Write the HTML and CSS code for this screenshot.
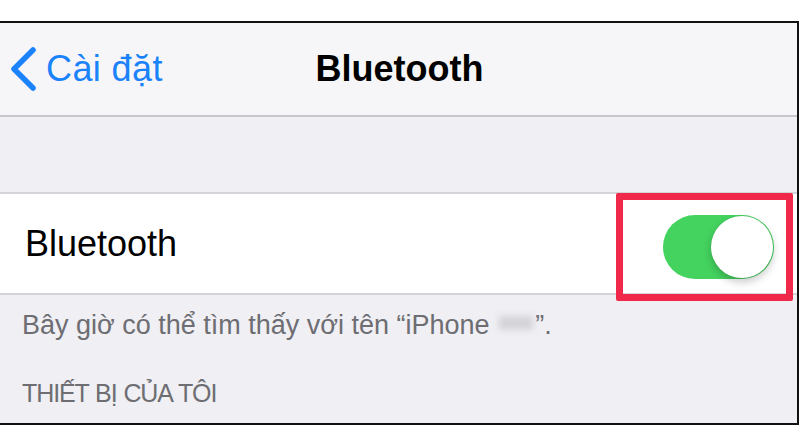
FILE: index.html
```html
<!DOCTYPE html>
<html lang="vi">
<head>
<meta charset="utf-8">
<link rel="stylesheet" href="styles.css">
</head>
<body>
<div class="frame">
  <header class="nav">
    <div class="back">
      <svg class="chev" width="30" height="46" viewBox="0 0 30 46"><path d="M25 4 L6 23 L25 42" fill="none" stroke="#1a82fb" stroke-width="5.5" stroke-linecap="round" stroke-linejoin="round"/></svg>
      <span class="back-label">Cài đặt</span>
    </div>
    <div class="title">Bluetooth</div>
  </header>
  <div class="gap"></div>
  <div class="cell">
    <span class="cell-label">Bluetooth</span>
    <div class="highlight">
      <div class="toggle"><div class="knob"></div></div>
    </div>
  </div>
  <div class="footer">
    <p class="note">Bây giờ có thể tìm thấy với tên “iPhone <span class="blur"></span>”.</p>
    <p class="section">THIẾT BỊ CỦA TÔI</p>
  </div>
</div>
</body>
</html>
```
FILE: styles.css
```css
* { box-sizing: border-box; }
html, body { margin: 0; padding: 0; background: #fff; }
body { font-family: "Liberation Sans", Arial, sans-serif; }
.frame {
  margin-top: 21px;
  width: 799px;
  height: 404px;
  border-top: 2px solid #111;
  border-bottom: 2px solid #111;
  border-right: 2px solid #111;
  background: #efeff4;
  display: flex;
  flex-direction: column;
}
.nav {
  height: 94px;
  background: #f6f6f8;
  border-bottom: 2px solid #c8c8cc;
  display: flex;
  align-items: center;
  position: relative;
}
.back {
  display: flex;
  align-items: center;
  padding-left: 8px;
  gap: 8px;
  color: #1a82fb;
}
.chev { display: block; }
.back-label { font-size: 36px; color: #1a82fb; letter-spacing: 0.4px; }
.title {
  position: absolute;
  left: 0; right: 0;
  text-align: center;
  font-size: 36px;
  font-weight: bold;
  color: #000;
  padding-left: 2px;
}
.gap {
  height: 77px;
  border-bottom: 2px solid #d3d3d8;
}
.cell {
  height: 101px;
  background: #fff;
  border-bottom: 2px solid #d3d3d8;
  display: flex;
  align-items: center;
  justify-content: space-between;
  padding-left: 25px;
  position: relative;
}
.cell-label { font-size: 36px; color: #000; }
.highlight {
  position: absolute;
  left: 616px;
  top: -1px;
  width: 177px;
  height: 108px;
  border: 7px solid #f0284a;
  border-radius: 2px;
  display: flex;
  align-items: center;
  justify-content: flex-start;
  padding-left: 40px;
}
.toggle {
  width: 111px;
  height: 64px;
  border-radius: 32px;
  background: #44d35f;
  position: relative;
}
.knob {
  position: absolute;
  right: 1px;
  top: 1px;
  width: 62px;
  height: 62px;
  border-radius: 50%;
  background: #fff;
  box-shadow: 0 4px 8px rgba(0,0,0,0.22), 0 0 1px rgba(0,0,0,0.2);
}
.footer {
  flex: 1;
  padding-left: 22px;
  color: #6d6d72;
}
.note {
  margin: 13px 0 0;
  font-size: 27px;
  line-height: 34px;
}
.blur {
  display: inline-block;
  width: 34px;
  height: 14px;
  background: #d4d4d8;
  filter: blur(3px);
  vertical-align: 4px;
  margin: 0 2px;
}
.section {
  margin: 34px 0 0;
  font-size: 25px;
  line-height: 34px;
  letter-spacing: -1.1px;
  word-spacing: 1px;
}
```
